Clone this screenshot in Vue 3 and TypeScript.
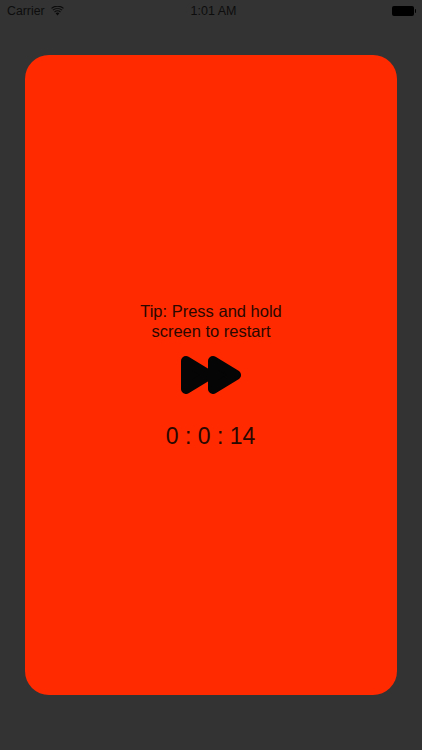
<script setup lang="ts">
const tip = ['Tip: Press and hold', 'screen to restart']
const time = '0 : 0 : 14'
</script>

<template>
  <div class="screen">
    <div class="status">
      <div class="left">
        <span class="carrier">Carrier</span>
        <svg class="wifi" width="13" height="10" viewBox="0 0 13 10">
          <path d="M6.5 9.6 4.6 7.3a3 3 0 0 1 3.8 0Z" fill="#0b0b0b" />
          <path d="M3.5 6a4.8 4.8 0 0 1 6 0M1.9 4.1a7.2 7.2 0 0 1 9.2 0M.5 2.3a9.4 9.4 0 0 1 12 0" fill="none" stroke="#0b0b0b" stroke-width="1.1" />
        </svg>
      </div>
      <span class="clock">1:01 AM</span>
      <div class="battery"><span class="cell"></span><span class="nub"></span></div>
    </div>
    <div class="card">
      <div class="tip">
        <div v-for="line in tip" :key="line">{{ line }}</div>
      </div>
      <svg class="ff" width="60" height="38" viewBox="0 0 60 38">
        <path d="M5 5 L28 19 L5 33 Z" fill="#050505" stroke="#050505" stroke-width="10" stroke-linejoin="round" />
        <path d="M32 5 L55 19 L32 33 Z" fill="#050505" stroke="#050505" stroke-width="10" stroke-linejoin="round" />
      </svg>
      <div class="time">{{ time }}</div>
    </div>
  </div>
</template>

<style>
html, body { margin: 0; background: #333333; }
</style>

<style scoped>
.screen {
  width: 422px;
  height: 750px;
  background: #333333;
  display: flex;
  flex-direction: column;
  font-family: "Liberation Sans", Arial, sans-serif;
  color: #0b0b0b;
  overflow: hidden;
}
.status {
  height: 22px;
  padding: 0 6px 0 7px;
  display: grid;
  grid-template-columns: 1fr auto 1fr;
  align-items: center;
  font-size: 12.3px;
  flex: none;
}
.left { display: flex; align-items: center; gap: 6px; }
.carrier { color: #0d0d0d; }
.wifi { display: block; }
.clock { color: #0d0d0d; font-size: 12.5px; margin-left: 4px; }
.battery { justify-self: end; display: flex; align-items: center; gap: 1px; }
.cell { width: 22px; height: 10px; background: #000; border-radius: 2px; display: block; }
.nub { width: 1.5px; height: 4px; background: #000; border-radius: 0 1px 1px 0; display: block; }
.card {
  margin: 33px 25px 0;
  height: 640px;
  border-radius: 24px;
  background: #ff2a00;
  display: flex;
  flex-direction: column;
  align-items: center;
  padding-top: 246px;
  box-sizing: border-box;
}
.tip {
  font-size: 16.5px;
  line-height: 20px;
  text-align: center;
  color: #2a0800;
}
.ff { display: block; margin-top: 15px; }
.time {
  margin-top: 27px;
  font-size: 23px;
  line-height: 30px;
  color: #2a0800;
  transform: translateX(-0.5px);
}
</style>
